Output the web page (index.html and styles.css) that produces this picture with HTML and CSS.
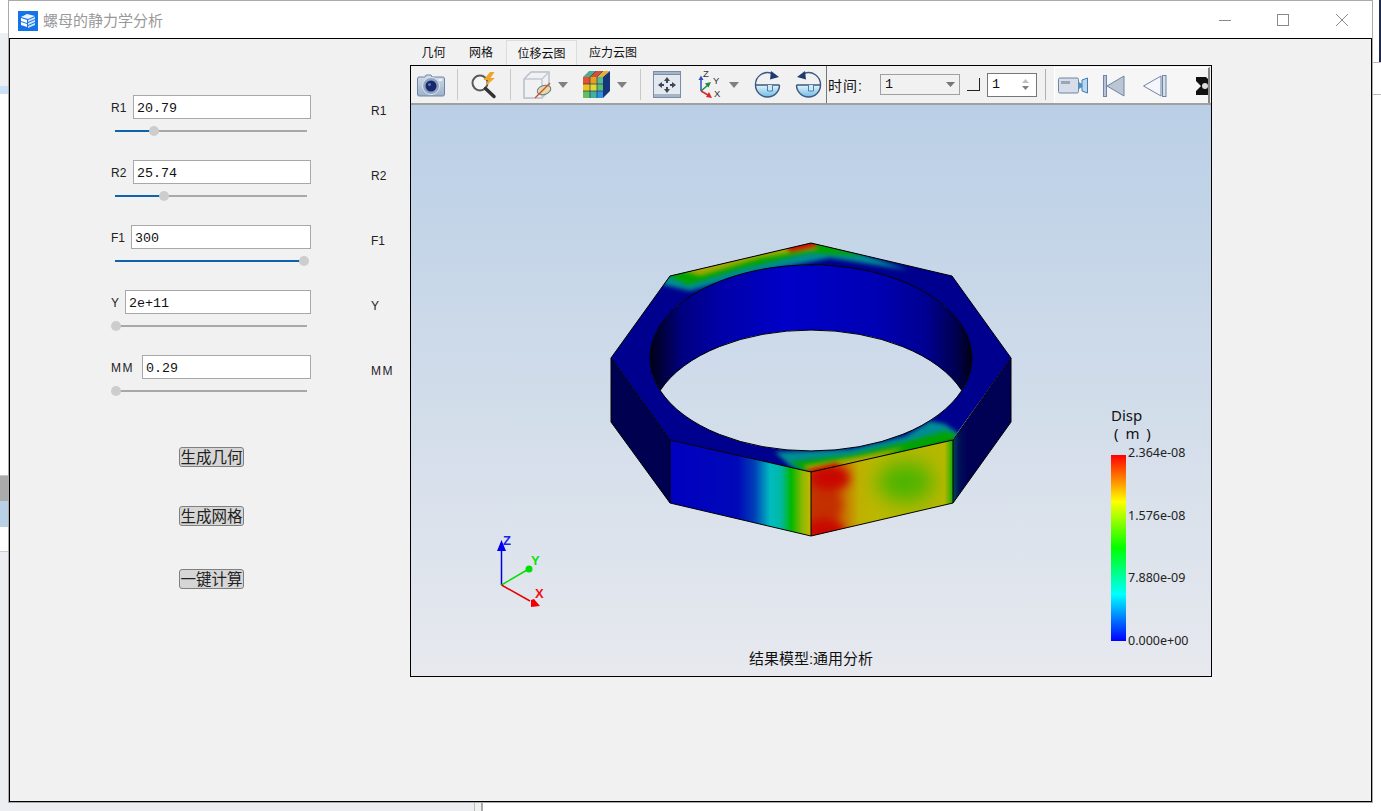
FILE: index.html
```html
<!DOCTYPE html>
<html lang="zh-CN">
<head>
  <meta charset="UTF-8" />
  <title>螺母的静力学分析</title>
  <link rel="stylesheet" href="styles.css">
</head>
<body>
  <div class="desktop">
    <!-- bits of other windows behind -->
    <div class="behind-left">
      <div class="bl-a"></div>
      <div class="bl-b"></div>
      <div class="bl-c"></div>
      <div class="bl-d"></div>
      <div class="bl-e"></div>
      <div class="bl-f"></div>
      <div class="bl-g"></div>
    </div>
    <div class="behind-right">
      <div class="br-a"></div>
      <div class="br-b"></div>
      <div class="br-c"></div>
    </div>
    <div class="behind-bottom">
      <div class="bb-a"></div>
      <div class="bb-b"></div>
    </div>

    <div class="window">
      <div class="titlebar">
        <svg class="app-icon" width="20" height="20" viewBox="0 0 20 20">
          <rect width="20" height="20" fill="#1473e6"/>
          <path d="M3 6 L9 3 L17 5 L10 8 Z" fill="#e8f2fd"/>
          <path d="M3 7 L9 9 V12 L3 10 Z M3 11 L9 13 V16 L3 14 Z" fill="#fff"/>
          <path d="M10 9 L17 6 V8 L10 11 Z M10 12 L17 9 V11 L10 14 Z M10 15 L17 12 V14 L10 17 Z" fill="#cfe3fa"/>
        </svg>
        <div class="title-text">螺母的静力学分析</div>
        <div class="win-controls">
          <svg class="win-min" width="12" height="12" viewBox="0 0 12 12"><path d="M0 6.5 H12" stroke="#8a8a8a"/></svg>
          <svg class="win-max" width="12" height="12" viewBox="0 0 12 12"><rect x=".5" y=".5" width="11" height="11" fill="none" stroke="#8a8a8a"/></svg>
          <svg class="win-close" width="12" height="12" viewBox="0 0 12 12"><path d="M0 0 L12 12 M12 0 L0 12" stroke="#8a8a8a"/></svg>
        </div>
      </div>

      <div class="content">
        <div class="left-panel">
          <div class="form">
            <div class="param">
              <div class="param-head">
                <span class="param-label">R1</span>
                <div class="param-input w-r">20.79</div>
              </div>
              <div class="slider">
                <div class="fill" style="width: 39px"></div>
                <div class="knob"></div>
                <div class="rest"></div>
              </div>
            </div>
            <div class="param">
              <div class="param-head">
                <span class="param-label">R2</span>
                <div class="param-input w-r">25.74</div>
              </div>
              <div class="slider">
                <div class="fill" style="width: 49px"></div>
                <div class="knob"></div>
                <div class="rest"></div>
              </div>
            </div>
            <div class="param">
              <div class="param-head">
                <span class="param-label">F1</span>
                <div class="param-input w-f">300</div>
              </div>
              <div class="slider">
                <div class="fill" style="width: 189px"></div>
                <div class="knob"></div>
                <div class="rest"></div>
              </div>
            </div>
            <div class="param">
              <div class="param-head">
                <span class="param-label">Y</span>
                <div class="param-input w-y">2e+11</div>
              </div>
              <div class="slider">
                <div class="fill" style="width: 1px"></div>
                <div class="knob"></div>
                <div class="rest"></div>
              </div>
            </div>
            <div class="param">
              <div class="param-head">
                <span class="param-label wide">MM</span>
                <div class="param-input w-m">0.29</div>
              </div>
              <div class="slider">
                <div class="fill" style="width: 1px"></div>
                <div class="knob"></div>
                <div class="rest"></div>
              </div>
            </div>
            <div class="actions">
              <div class="btn">生成几何</div>
              <div class="btn">生成网格</div>
              <div class="btn btn-last">一键计算</div>
            </div>
          </div>
          <div class="side-labels">
            <div>R1</div>
            <div>R2</div>
            <div>F1</div>
            <div>Y</div>
            <div class="wide">MM</div>
          </div>
        </div>

        <div class="right-panel">
          <div class="tabs">
            <div class="tab tab-geo">几何</div>
            <div class="tab tab-mesh">网格</div>
            <div class="tab tab-disp active">位移云图</div>
            <div class="tab tab-stress">应力云图</div>
          </div>

          <div class="viewport">
            <div class="toolbar">
              <svg class="tool t-camera" width="28" height="24" viewBox="0 0 28 24">
                <defs>
                  <linearGradient id="camBody" x1="0" y1="0" x2="0" y2="1"><stop offset="0" stop-color="#d4deeb"/><stop offset="1" stop-color="#9db0c8"/></linearGradient>
                  <linearGradient id="quarter" x1="0" y1="0" x2="0" y2="1"><stop offset="0" stop-color="#e4f2fa"/><stop offset="1" stop-color="#70bce8"/></linearGradient>
                </defs>
                <path d="M2 4 H8 L9 2 H14 L15 4 H26 Q27.500 4 27.500 6 V21 Q27.500 23 26 23 H2 Q.5 23 .5 21 V6 Q.5 4 2 4 Z" fill="url(#camBody)" stroke="#6d85a6"/>
                <circle cx="14" cy="13" r="8.500" fill="#8da3c0" stroke="#dfe6ef"/>
                <circle cx="14" cy="13" r="5.500" fill="#17296b"/>
                <circle cx="12.500" cy="11.500" r="1.500" fill="#5c78b8"/>
                <rect x="21.500" y="6" width="3.500" height="2" fill="#eef3f9"/>
              </svg>
              <div class="sep s-1"></div>
              <svg class="tool t-zoom" width="27" height="26" viewBox="0 0 27 26">
                <circle cx="10" cy="11" r="7.500" fill="#f6f6f6" stroke="#5a5a5a" stroke-width="2"/>
                <path d="M15.500 16.500 L24 24.500" stroke="#333" stroke-width="3.500" stroke-linecap="round"/>
                <path d="M20 0 L13.500 8 H18 L15.500 14 L25 6 H20.500 L24.500 0 Z" fill="#eda52c"/>
              </svg>
              <div class="sep s-2"></div>
              <svg class="tool t-cube" width="28" height="28" viewBox="0 0 28 28">
                <path d="M1 8 L8 1 H26 V19 L19 27 H1 Z" fill="#f1f1f3" stroke="#b7bfca" stroke-width="1.500"/>
                <path d="M1 8 H19 V27 M19 8 L26 1" fill="none" stroke="#c2c9d3" stroke-width="1.500"/>
                <ellipse cx="21" cy="19" rx="7" ry="4.500" fill="#e6d9a6" stroke="#5f7590" transform="rotate(-18 21 19)"/>
                <path d="M12 27 L27 12" stroke="#c9572c" stroke-width="1.500"/>
              </svg>
              <svg class="drop d-1" width="10" height="6" viewBox="0 0 10 6"><path d="M0 0 H10 L5 6 Z" fill="#808080"/></svg>
              <svg class="tool t-box" width="28" height="27" viewBox="0 0 28 27">
                <path d="M1 6 L7 0 H14 L8 6 Z" fill="#4cae8c"/>
                <path d="M8 6 L14 0 H21 L15 6 Z" fill="#d84c38"/>
                <path d="M15 6 L21 0 H28 L21 6 Z" fill="#e8b030"/>
                <rect x="1" y="6" width="7" height="7" fill="#e85030"/>
                <rect x="8" y="6" width="7" height="7" fill="#e8a020"/>
                <rect x="15" y="6" width="6" height="7" fill="#58b890"/>
                <rect x="1" y="13" width="7" height="7" fill="#f0c020"/>
                <rect x="8" y="13" width="7" height="7" fill="#e0d830"/>
                <rect x="15" y="13" width="6" height="7" fill="#58c070"/>
                <rect x="1" y="20" width="7" height="7" fill="#60c060"/>
                <rect x="8" y="20" width="7" height="7" fill="#40b0a0"/>
                <rect x="15" y="20" width="6" height="7" fill="#3090e0"/>
                <path d="M21 6 L28 0 V20 L21 27 Z" fill="#16367c"/>
                <path d="M8 6 V27 M15 6 V27 M1 13 H21 M1 20 H21 M8 6 L14 0 M15 6 L21 0" stroke="#1e3a5e" stroke-width=".7"/>
              </svg>
              <svg class="drop d-2" width="10" height="6" viewBox="0 0 10 6"><path d="M0 0 H10 L5 6 Z" fill="#808080"/></svg>
              <div class="sep s-3"></div>
              <svg class="tool t-fit" width="28" height="27" viewBox="0 0 28 27">
                <rect x=".5" y=".5" width="27" height="26" fill="#e4e8ef" stroke="#7c8ca6"/>
                <rect x=".5" y=".5" width="27" height="3" fill="#a6b4c8" stroke="#7c8ca6"/>
                <rect x="1" y="23" width="26" height="3" fill="#a6b4c8"/>
                <path d="M14 6 L11 10 H13 V12 H15 V10 H17 Z M14 22 L11 18 H13 V16 H15 V18 H17 Z M5 14 L9 11 V13 H11 V15 H9 V17 Z M23 14 L19 11 V13 H17 V15 H19 V17 Z" fill="#3c4656"/>
              </svg>
              <svg class="tool t-triad" width="28" height="27" viewBox="0 0 28 27">
                <path d="M4 20 V8" stroke="#2850c0" stroke-width="1.500"/>
                <path d="M4 4.500 L1.500 9 H6.500 Z" fill="#2850c0"/>
                <path d="M4 20 L11 14" stroke="#1a8c3c" stroke-width="1.500"/>
                <path d="M14 11 L8 12.500 L11.500 16.500 Z" fill="#1a8c3c"/>
                <path d="M4 20 L11 24" stroke="#d82828" stroke-width="1.500"/>
                <path d="M15 27 L9 26 L12 21 Z" fill="#d82828"/>
                <text x="6" y="5.500" class="triad-mini">Z</text>
                <text x="16" y="13" class="triad-mini">Y</text>
                <text x="17" y="25.500" class="triad-mini">X</text>
              </svg>
              <svg class="drop d-3" width="10" height="6" viewBox="0 0 10 6"><path d="M0 0 H10 L5 6 Z" fill="#808080"/></svg>
              <svg class="tool t-rot1" width="27" height="27" viewBox="0 0 27 27">
                <path d="M1.500 14 H25.500 A12 12 0 0 1 1.500 14 Z" fill="url(#quarter)"/>
                <path d="M1.500 14 A12 12 0 0 1 18 2.500 M25.500 14 A12 12 0 0 1 1.500 14 M1.500 14 H25.500" fill="none" stroke="#3c5a80" stroke-width="1.400"/>
                <path d="M13.500 14 V20 H18.500 V14" fill="#cfe8f6" stroke="#4a7ea8"/>
                <path d="M17 0 L25 6 L16 8.500 Z" fill="#1e3a6e"/>
              </svg>
              <svg class="tool t-rot2" width="27" height="27" viewBox="0 0 27 27">
                <path d="M1.500 14 H25.500 A12 12 0 0 1 1.500 14 Z" fill="url(#quarter)"/>
                <path d="M25.500 14 A12 12 0 0 0 9 2.500 M1.500 14 A12 12 0 0 0 25.500 14 M1.500 14 H25.500" fill="none" stroke="#3c5a80" stroke-width="1.400"/>
                <path d="M13.500 14 V20 H18.500 V14" fill="#cfe8f6" stroke="#4a7ea8"/>
                <path d="M10 0 L2 6 L11 8.500 Z" fill="#1e3a6e"/>
              </svg>
              <div class="sep-dark"></div>
              <div class="time-label">时间:</div>
              <div class="combo">
                <span>1</span>
                <svg width="9" height="5" viewBox="0 0 9 5"><path d="M0 0 H9 L4.500 5 Z" fill="#777"/></svg>
              </div>
              <div class="corner-box"></div>
              <div class="spin">
                <span>1</span>
                <div class="spin-arrows">
                  <svg width="7" height="4" viewBox="0 0 7 4"><path d="M3.500 0 L7 4 H0 Z" fill="#c0c0c0"/></svg>
                  <svg width="7" height="4" viewBox="0 0 7 4"><path d="M0 0 H7 L3.500 4 Z" fill="#808080"/></svg>
                </div>
              </div>
              <div class="sep s-4"></div>
              <div class="play-bar">
                <svg class="t-video" width="30" height="17" viewBox="0 0 30 17">
                  <rect x=".5" y="1" width="20" height="15" rx="1.500" fill="#d6dde8" stroke="#6d85a6"/>
                  <rect x="3" y="4" width="9" height="3" fill="#9aa6b8"/>
                  <path d="M21 5 L24 7 V10 L21 12 Z" fill="#4b94c8"/>
                  <path d="M24 3 L29.500 1 V16 L24 14 Z" fill="#bcd6ea" stroke="#3e7eb4"/>
                </svg>
                <svg class="t-prev" width="22" height="22" viewBox="0 0 22 22">
                  <rect x=".5" y=".5" width="3" height="21" fill="#b8c4d4" stroke="#6d85a6"/>
                  <path d="M4 11 L21 1 V21 Z" fill="#bcc6d2" stroke="#6d85a6"/>
                </svg>
                <svg class="t-back" width="24" height="22" viewBox="0 0 24 22">
                  <path d="M.5 11 L18 1 V21 Z" fill="#f4f6f9" stroke="#6d85a6"/>
                  <rect x="19.500" y=".5" width="3.500" height="21" fill="#d8dfe8" stroke="#6d85a6"/>
                </svg>
                <svg class="t-cut" width="12" height="18" viewBox="0 0 12 18">
                  <path d="M0 0 H10 L12 2 V18 H0 V14 L5 9 L0 4 Z" fill="#111"/>
                  <circle cx="9" cy="9" r="3" fill="#ddd"/>
                </svg>
              </div>
            </div>

            <div class="scene">
              <svg class="scene-svg" width="800" height="571" viewBox="411 105 800 571">
                <defs>
                  <clipPath id="topClip">
                    <path clip-rule="evenodd" d="M811 243 L952 276 L1011 358 L952 440 L811 472 L670 440 L611 358 L670 276 Z M650 358 A161 93 0 1 0 972 358 A161 93 0 1 0 650 358 Z"/>
                  </clipPath>
                  <clipPath id="frontRightClip">
                    <path d="M811 472 L953 440 V503 L811 536 Z"/>
                  </clipPath>
                  <filter id="blur2" x="-20%" y="-40%" width="140%" height="180%" color-interpolation-filters="sRGB"><feGaussianBlur stdDeviation="2"/></filter>
                  <filter id="blur5" x="-60%" y="-60%" width="220%" height="220%" color-interpolation-filters="sRGB"><feGaussianBlur stdDeviation="5"/></filter>
                  <filter id="blur8" x="-60%" y="-60%" width="220%" height="220%" color-interpolation-filters="sRGB"><feGaussianBlur stdDeviation="10"/></filter>
                  <linearGradient id="wall" gradientUnits="userSpaceOnUse" x1="650" y1="0" x2="972" y2="0">
                    <stop offset="0" stop-color="#000018"/>
                    <stop offset=".04" stop-color="#000040"/>
                    <stop offset=".1" stop-color="#000080"/>
                    <stop offset=".22" stop-color="#0000a8"/>
                    <stop offset=".42" stop-color="#0000c8"/>
                    <stop offset=".7" stop-color="#0000b4"/>
                    <stop offset=".86" stop-color="#000090"/>
                    <stop offset=".95" stop-color="#000050"/>
                    <stop offset="1" stop-color="#000018"/>
                  </linearGradient>
                  <linearGradient id="frontLeft" gradientUnits="userSpaceOnUse" x1="670" y1="0" x2="811" y2="0">
                    <stop offset="0" stop-color="#0000c0"/>
                    <stop offset=".48" stop-color="#0008b8"/>
                    <stop offset=".6" stop-color="#0040b8"/>
                    <stop offset=".71" stop-color="#00bcc0"/>
                    <stop offset=".79" stop-color="#00b8a0"/>
                    <stop offset=".86" stop-color="#00b800"/>
                    <stop offset=".94" stop-color="#90b800"/>
                    <stop offset="1" stop-color="#c4b800"/>
                  </linearGradient>
                  <linearGradient id="frontRight" gradientUnits="userSpaceOnUse" x1="811" y1="0" x2="953" y2="0">
                    <stop offset="0" stop-color="#c03800"/>
                    <stop offset=".15" stop-color="#c84c00"/>
                    <stop offset=".26" stop-color="#c88400"/>
                    <stop offset=".34" stop-color="#c0b000"/>
                    <stop offset=".45" stop-color="#bcb800"/>
                    <stop offset=".8" stop-color="#b4b800"/>
                    <stop offset=".94" stop-color="#b8b800"/>
                    <stop offset=".985" stop-color="#40b000"/>
                    <stop offset="1" stop-color="#00b000"/>
                  </linearGradient>
                  <linearGradient id="sideRight" gradientUnits="userSpaceOnUse" x1="953" y1="0" x2="968" y2="0">
                    <stop offset="0" stop-color="#004858"/>
                    <stop offset=".4" stop-color="#001058"/>
                    <stop offset="1" stop-color="#000054"/>
                  </linearGradient>
                </defs>

                <!-- nut: side faces -->
                <path d="M611 358 L670 440 V503 L611 422 Z" fill="#000050"/>
                <path d="M1011 358 L953 440 V503 L1011 422 Z" fill="url(#sideRight)"/>
                <path d="M670 440 L811 472 V536 L670 503 Z" fill="url(#frontLeft)"/>
                <path d="M811 472 L953 440 V503 L811 536 Z" fill="url(#frontRight)"/>
                <g clip-path="url(#frontRightClip)">
                  <ellipse cx="905" cy="482" rx="28" ry="20" fill="#4cb400" filter="url(#blur8)"/>
                  <ellipse cx="826" cy="505" rx="16" ry="16" fill="#c43000" filter="url(#blur5)"/>
                  <ellipse cx="830" cy="478" rx="20" ry="13" fill="#c80800" filter="url(#blur5)"/>
                  <ellipse cx="825" cy="532" rx="20" ry="14" fill="#c80800" filter="url(#blur5)"/>
                </g>

                <!-- nut: top face with hole and colour bands -->
                <path fill-rule="evenodd" fill="#00008e" d="M811 243 L952 276 L1011 358 L952 440 L811 472 L670 440 L611 358 L670 276 Z M650 358 A161 93 0 1 0 972 358 A161 93 0 1 0 650 358 Z"/>
                <g clip-path="url(#topClip)">
                  <g filter="url(#blur2)">
                    <path d="M660 276 L811 236 L908 270 L830 258 L760 272 L690 291 L660 284 Z" fill="#008c94"/>
                    <path d="M664 274 L811 238 L866 256 L810 253 L740 269 L688 285 Z" fill="#00a400"/>
                    <path d="M680 270 L811 238 L818 249 L760 258 L700 276 Z" fill="#a0a800"/>
                    <path d="M785 244 L811 238 L818 246 L790 252 Z" fill="#d00c00"/>
                    <path d="M775 452 L850 449 L905 436 L930 421 L945 424 L965 438 L811 478 L790 466 Z" fill="#008c94"/>
                    <path d="M790 462 L850 455 L910 441 L945 431 L965 438 L815 478 Z" fill="#00a400"/>
                    <path d="M803 466 L860 456 L905 447 L860 468 L815 478 Z" fill="#a8a800"/>
                    <path d="M806 470 L835 463 L845 466 L815 478 Z" fill="#d00c00"/>
                  </g>
                </g>

                <!-- nut: inner wall seen through the hole -->
                <path fill="url(#wall)" d="M660.200 390.500 A161 93 0 1 1 961.800 390.500 A161 93 0 0 0 660.200 390.500 Z"/>

                <!-- edges -->
                <g fill="none" stroke="#000" stroke-width="1">
                  <path d="M811 243 L952 276 L1011 358 V422 L953 503 L811 536 L670 503 L611 422 V358 L670 276 Z"/>
                  <path d="M611 358 L670 440 L811 472 L953 440 L1011 358 M670 440 V503 M811 472 V536 M953 440 V503"/>
                  <path d="M660.200 390.500 A161 93 0 1 1 961.800 390.500 A161 93 0 0 0 660.200 390.500 Z"/>
                  <path d="M660.200 390.500 A161 93 0 0 0 961.800 390.500"/>
                </g>

                <!-- axis triad -->
                <path d="M501.500 585 V551" stroke="#0000e0" stroke-width="1.500"/>
                <path d="M501.500 540 L497 551 H506 Z" fill="#0000f0"/>
                <path d="M501.500 585 L527 570" stroke="#00e000" stroke-width="1.500"/>
                <circle cx="529" cy="569" r="3.500" fill="#00e000"/>
                <path d="M501.500 585 L530 601" stroke="#e80000" stroke-width="1.500"/>
                <path d="M540 606 L531 607 L531 600 L534 599 Z" fill="#f00000"/>
                <text x="503" y="545" class="axis axis-z">Z</text>
                <text x="531" y="565" class="axis axis-y">Y</text>
                <text x="535" y="598" class="axis axis-x">X</text>
              </svg>

              <div class="legend">
                <div class="legend-title">Disp</div>
                <div class="legend-title legend-unit">( m )</div>
                <div class="legend-body">
                  <div class="legend-bar"></div>
                  <div class="legend-values">
                    <div>2.364e-08</div>
                    <div>1.576e-08</div>
                    <div>7.880e-09</div>
                    <div>0.000e+00</div>
                  </div>
                </div>
              </div>
              <div class="caption">结果模型:通用分析</div>
            </div>
          </div>
        </div>
      </div>
    </div>
  </div>
</body>
</html>
```

FILE: styles.css
```css
:root {
  --panel: #f1f1f1;
  --line: #a8a8a8;
  --blue: #0f62ad;
  --cjk: "Liberation Sans", "Noto Sans CJK SC", sans-serif;
}

html, body {
  margin: 0;
  padding: 0;
  background-color: #fff;
}

.desktop {
  position: relative;
  width: 1381px;
  height: 811px;
  overflow: hidden;
  font-family: var(--cjk);
  color: #111;
}

/* other windows behind */
.behind-left {
  position: absolute;
  left: 0;
  top: 0;
  width: 9px;
  height: 811px;
  display: flex;
  flex-direction: column;
}

.bl-a { height: 33px; background-color: #fff; }
.bl-b { height: 53px; background-color: #eeeff2; }
.bl-c { height: 8px; background-color: #cce0f8; }
.bl-d { height: 381px; background-color: #fff; border-bottom: 1px solid #c8c8c8; }
.bl-e { height: 25px; background-color: #ababab; }
.bl-f { height: 26px; background-color: #b9d1e6; }
.bl-g { flex: 1; background: linear-gradient(#fff 24px, #ccc 24px, #ccc 25px, #eceef2 25px); }

.behind-right {
  position: absolute;
  right: 0;
  top: 0;
  width: 8px;
  height: 811px;
  display: flex;
  flex-direction: column;
}

.br-a { height: 62px; background: linear-gradient(90deg, #fff 6px, #1e2a50 6px); }
.br-b { height: 31px; border-top: 1px solid #bbb; }
.br-c { flex: 1; border-top: 1px solid #bbb; }

.behind-bottom {
  position: absolute;
  left: 0;
  top: 803px;
  height: 8px;
  display: flex;
}

.bb-a { width: 474px; background-color: #eceef1; border-right: 1px solid #bbb; }
.bb-b { width: 6px; background-color: #f0f0f0; border-right: 2px solid #aaa; }

/* the app window */
.window {
  position: absolute;
  left: 8px;
  top: 0;
  width: 1365px;
  height: 803px;
  box-sizing: border-box;
  background-color: #fff;
  border: 1px solid #aaa;
  display: flex;
  flex-direction: column;
}

.titlebar {
  height: 37px;
  display: flex;
  align-items: center;
  padding-left: 9px;
}

.app-icon {
  flex: none;
  margin-top: 2px;
}

.title-text {
  margin-left: 5px;
  font-size: 15px;
  color: #999;
}

.win-controls {
  margin-left: auto;
  display: flex;
  align-items: center;
}

.win-controls svg { display: block; }
.win-min { margin-right: 46px; }
.win-max { margin-right: 47px; }
.win-close { margin-right: 24px; }

.content {
  flex: 1;
  display: flex;
  background-color: var(--panel);
  border: 1px solid #000;
  min-height: 0;
}

/* left column with the parameters */
.left-panel {
  width: 400px;
  flex: none;
  box-sizing: border-box;
  padding: 56px 0 0 101px;
  display: flex;
}

.form {
  width: 200px;
  flex: none;
}

.param {
  height: 65px;
}

.param-head {
  height: 24px;
  display: flex;
  justify-content: space-between;
  align-items: center;
}

.param-label {
  font-size: 12px;
  margin-top: 1px;
  color: #222;
}

.wide { letter-spacing: 1.5px; }

.param-input {
  height: 24px;
  box-sizing: border-box;
  border: 1px solid var(--line);
  background-color: #fff;
  padding-left: 3px;
  font-family: "Liberation Mono", monospace;
  font-size: 13.33px;
  line-height: 25px;
  color: #111;
}

.w-r { width: 178px; }
.w-f { width: 180px; }
.w-y { width: 186px; }
.w-m { width: 169px; }

.slider {
  margin: 7px 4px 0 4px;
  height: 10px;
  display: flex;
  align-items: center;
}

.fill {
  height: 2px;
  background-color: var(--blue);
}

.rest {
  flex: 1;
  height: 2px;
  background-color: var(--line);
}

.knob {
  flex: none;
  width: 10px;
  height: 10px;
  margin: 0 -5px;
  border-radius: 50%;
  background-color: #cdcdcd;
  position: relative;
}

.actions {
  margin-top: 27px;
  margin-left: 68px;
}

.btn {
  width: 65px;
  height: 20px;
  box-sizing: border-box;
  margin-bottom: 39px;
  border: 1px solid #808080;
  border-radius: 3px;
  background-color: #d6d6d6;
  font-size: 15.5px;
  line-height: 19px;
  text-align: center;
  white-space: nowrap;
  color: #222;
}

.btn:nth-child(2) { margin-bottom: 43px; }

.side-labels {
  margin-left: 60px;
  font-size: 12px;
  color: #222;
}

.side-labels div {
  height: 65px;
  line-height: 32px;
}

/* tabs and viewer */
.right-panel {
  width: 802px;
  flex: none;
  padding-top: 1px;
}

.tabs {
  height: 25px;
  display: flex;
  font-size: 12px;
}

.tab {
  box-sizing: border-box;
  height: 25px;
  line-height: 26px;
  text-align: center;
  color: #111;
}

.tab-geo { width: 47px; }
.tab-mesh { width: 48px; }
.tab-disp { width: 71px; margin-left: 1px; }
.tab-stress { width: 72px; }

.tab.active {
  background-color: #f3f3f3;
  border: 1px solid #dcdcdc;
  border-bottom: none;
}

.viewport {
  height: 612px;
  box-sizing: border-box;
  border: 1px solid #000;
  background-color: #fff;
}

.toolbar {
  height: 39px;
  box-sizing: border-box;
  border-bottom: 2px solid #a0a0a0;
  background-color: var(--panel);
  padding-left: 6px;
  display: flex;
  align-items: center;
}

.tool, .drop { flex: none; display: block; overflow: visible; }

.sep {
  flex: none;
  width: 1px;
  height: 31px;
  background-color: #c8c8c8;
}

.s-1 { margin-left: 12px; }
.s-2 { margin-left: 13px; }
.s-3 { margin-left: 13px; }
.s-4 { margin-left: 8px; background-color: #b0b0b0; }

.t-zoom { margin-left: 12px; }
.t-cube { margin-left: 12px; }
.d-1 { margin-left: 7px; }
.t-box { margin-left: 14px; }
.d-2 { margin-left: 7px; }
.t-fit { margin-left: 12px; }
.t-triad { margin-left: 16px; }
.d-3 { margin-left: 4px; }
.t-rot1 { margin-left: 15px; }
.t-rot2 { margin-left: 14px; }

.triad-mini {
  font-family: "Liberation Sans", sans-serif;
  font-size: 9.5px;
  fill: #333;
}

.sep-dark {
  flex: none;
  width: 1px;
  height: 37px;
  margin-left: 4px;
  background-color: #777;
}

.time-label {
  flex: none;
  width: 52px;
  margin-left: 1px;
  font-size: 14px;
  letter-spacing: 1px;
  color: #111;
}

.combo {
  flex: none;
  width: 80px;
  height: 21px;
  box-sizing: border-box;
  border: 1px solid #a0a0a0;
  padding: 0 4px;
  display: flex;
  align-items: center;
  justify-content: space-between;
  font-family: "Liberation Mono", monospace;
  font-size: 13.33px;
}

.corner-box {
  flex: none;
  width: 13px;
  height: 13px;
  margin-left: 7px;
  box-sizing: border-box;
  border-right: 1px solid #222;
  border-bottom: 1px solid #222;
}

.spin {
  flex: none;
  width: 50px;
  height: 24px;
  margin-left: 7px;
  box-sizing: border-box;
  border: 1px solid #777;
  background-color: #fff;
  padding: 0 7px 0 4px;
  display: flex;
  align-items: center;
  justify-content: space-between;
  font-family: "Liberation Mono", monospace;
  font-size: 13.33px;
}

.spin-arrows {
  display: flex;
  flex-direction: column;
  gap: 3px;
}

.spin-arrows svg { display: block; }

.play-bar {
  flex: 1;
  align-self: stretch;
  margin: 1px 2px 0 8px;
  box-sizing: border-box;
  background-color: #f6f6f6;
  border-right: 2px solid #888;
  border-top: 1px solid #fff;
  border-left: 1px solid #fff;
  padding-left: 3px;
  display: flex;
  align-items: center;
}

.play-bar svg { display: block; flex: none; }
.t-prev { margin-left: 15px; }
.t-back { margin-left: 18px; }
.t-cut { margin-left: 29px; }

.scene {
  position: relative;
  height: 571px;
  background: linear-gradient(#bacfe6, #e7e9ee);
}

.scene-svg { display: block; }

.axis {
  font-family: "Liberation Sans", sans-serif;
  font-size: 13px;
  font-weight: bold;
}

.axis-z { fill: #2020f0; }
.axis-y { fill: #10e010; }
.axis-x { fill: #f01010; }

.legend {
  position: absolute;
  left: 700px;
  top: 301px;
}

.legend-title {
  height: 18px;
  font-family: "Noto Sans", sans-serif;
  font-size: 15px;
  line-height: 18px;
  color: #111;
  white-space: nowrap;
}

.legend-unit {
  margin-left: 3px;
  word-spacing: 3px;
}

.legend-body {
  margin-top: 13px;
  height: 186px;
  display: flex;
}

.legend-bar {
  width: 15px;
  height: 186px;
  background: linear-gradient(#ff0000, #ffff00 25%, #00ff00 50%, #00ffff 75%, #0000ff);
}

.legend-values {
  margin: -10px 0 -8px 2px;
  display: flex;
  flex-direction: column;
  justify-content: space-between;
  font-family: "Noto Sans", sans-serif;
  font-size: 12.5px;
  line-height: 16px;
  color: #222;
}

.caption {
  position: absolute;
  left: 0;
  right: 0;
  bottom: 8px;
  text-align: center;
  font-size: 15px;
  color: #111;
}
```
